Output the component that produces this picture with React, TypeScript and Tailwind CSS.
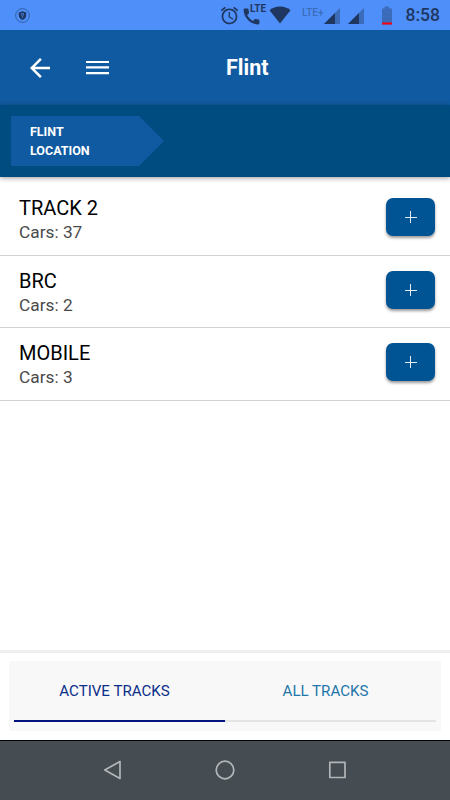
import React, { useState } from 'react';
import { MdAlarm, MdArrowBack, MdCall } from 'react-icons/md';

const tracks = [
  { name: 'TRACK 2', cars: 37 },
  { name: 'BRC', cars: 2 },
  { name: 'MOBILE', cars: 3 },
];

export default function App() {
  const [tab, setTab] = useState('active');

  return (
    <div className="flex flex-col w-[450px] h-[800px] overflow-hidden bg-white font-['Roboto',sans-serif]">
      <StatusBar />

      <header className="flex items-center h-[75px] shrink-0 pl-[25px] bg-[#105aa1] text-white">
        <button aria-label="Back">
          <MdArrowBack size={30} />
        </button>
        <button aria-label="Menu" className="ml-[31px]">
          <svg width="23" height="15" viewBox="0 0 23 15" fill="currentColor">
            <path d="M0 1h23v2H0zM0 6.300h23v2.200H0zM0 12.100h23v2.200H0z" />
          </svg>
        </button>
        <h1 className="ml-[117px] text-[21.5px] font-bold leading-none">Flint</h1>
      </header>

      <nav className="relative z-10 h-[72px] shrink-0 pt-[11px] pl-[11px] bg-[#004b80] shadow-[0_1px_5px_rgba(0,0,0,0.4)]">
        <div className="w-[153px] h-[50px] pt-[7px] pl-[19px] bg-[#105aa1] text-white text-[12.5px] leading-[18.5px] font-bold [clip-path:polygon(0_0,128px_0,100%_50%,128px_100%,0_100%)]">
          <div>FLINT</div>
          <div>LOCATION</div>
        </div>
      </nav>

      <main className="flex-1 pt-[6px]">
        {tracks.map((track) => (
          <TrackRow key={track.name} name={track.name} cars={track.cars} />
        ))}
      </main>

      <footer className="h-[90px] shrink-0 border-t-[3px] border-[#efefef] px-[9px] pt-[8px]">
        <div className="flex h-[70px] px-[5px] pb-[9px] bg-[#f8f8f8]">
          <TabButton label="ACTIVE TRACKS" active={tab === 'active'} onClick={() => setTab('active')} />
          <TabButton label="ALL TRACKS" active={tab === 'all'} onClick={() => setTab('all')} />
        </div>
      </footer>

      <div className="flex items-center justify-center gap-[92px] h-[60px] shrink-0 pb-px border-t border-black bg-[#454d52] text-[#b3b6b8]">
        <svg width="20" height="20" viewBox="0 0 20 20" fill="none" stroke="currentColor" strokeWidth="1.7" strokeLinejoin="round">
          <path d="M17 1.5v17L1.8 10z" />
        </svg>
        <svg width="20" height="20" viewBox="0 0 20 20" fill="none" stroke="currentColor" strokeWidth="1.7">
          <circle cx="10" cy="10" r="8.8" />
        </svg>
        <svg width="20" height="20" viewBox="0 0 20 20" fill="none" stroke="currentColor" strokeWidth="1.7" strokeLinejoin="round">
          <rect x="2.8" y="2.3" width="15.2" height="15.2" />
        </svg>
      </div>
    </div>
  );
}

function StatusBar() {
  return (
    <div className="flex items-center h-[30px] shrink-0 pl-[15px] pr-[10px] bg-[#4f8ff9] text-[#1f3760]">
      <svg width="15" height="15" viewBox="0 0 15 15">
        <circle cx="7.5" cy="7.5" r="6.9" fill="none" stroke="currentColor" strokeWidth="0.7" opacity="0.75" />
        <path d="M7.5 3.3 11.2 4.5v3c0 2.1-1.6 3.5-3.7 4.5-2.1-1-3.700-2.400-3.700-4.500v-3z" fill="currentColor" />
        <path d="M7.5 8.2v1.8M6.5 5.5h2v1.7l-1 1-1-1z" fill="none" stroke="#4f8ff9" strokeWidth="0.7" />
      </svg>

      <MdAlarm size={21} className="ml-auto" />
      <div className="relative ml-[3px] w-[26px] h-[21px] mt-[2px]">
        <MdCall size={21} className="ml-[-2px]" />
        <span className="absolute left-[7px] top-[-2px] text-[10px] leading-none font-bold">LTE</span>
      </div>
      <svg className="mb-px" width="22" height="18" viewBox="0 0 22 18" fill="currentColor">
        <path d="M11 17.5.5 4.2C3.4 1.8 7 .5 11 .5s7.600 1.300 10.500 3.700z" />
      </svg>
      <span className="ml-[11px] mb-[5px] text-[10px] leading-none font-medium text-[#3a6cba]">LTE+</span>
      <SignalIcon />
      <div className="w-[8px]" />
      <SignalIcon />
      <svg className="ml-[17px]" width="12" height="19" viewBox="0 0 12 19">
        <path d="M3.500.5h4.500v2h3v16H1v-16h2.500z" fill="#3a6cba" />
        <path d="M1 16.500h10v2H1z" fill="#ff0010" />
      </svg>
      <span className="ml-[13px] mt-px text-[17.5px] leading-none font-medium">8:58</span>
    </div>
  );
}

function SignalIcon() {
  return (
    <svg className="mt-px" width="16" height="16" viewBox="0 0 16 16">
      <path d="M0 16 16 0v16z" fill="#3a6cba" />
      <path d="M0 16 11 5v11z" fill="currentColor" />
    </svg>
  );
}

function TrackRow({ name, cars }: { name: string, cars: number }) {
  return (
    <div className="flex items-center justify-between h-[72.5px] pl-[19px] pr-[15px] border-b border-[#d2d2d2]">
      <div className="pt-[2.5px]">
        <div className="text-[20px] leading-[25px] text-black">{name}</div>
        <div className="text-[17.3px] leading-[23px] text-[#4a4a4a]">Cars: {cars}</div>
      </div>
      <button aria-label={`Add to ${name}`} className="flex items-center justify-center w-[49px] h-[38px] mb-[3px] rounded-[7px] bg-[#005493] text-white shadow-[0_2px_3px_rgba(0,0,0,0.4)]">
        <svg width="12" height="12" viewBox="0 0 12 12" stroke="currentColor" strokeWidth="0.9">
          <path d="M5.500 0v12M0 6.500h12" />
        </svg>
      </button>
    </div>
  );
}

function TabButton({ label, active, onClick }: { label: string, active: boolean, onClick: () => void }) {
  return (
    <button
      onClick={onClick}
      className={`flex-1 pt-[2px] pr-[10px] text-[15.1px] border-b-2 ${active ? 'text-[#0b2e8a] border-[#00137f]' : 'text-[#1f76a9] border-[#e4e4e4]'}`}
    >
      {label}
    </button>
  );
}
